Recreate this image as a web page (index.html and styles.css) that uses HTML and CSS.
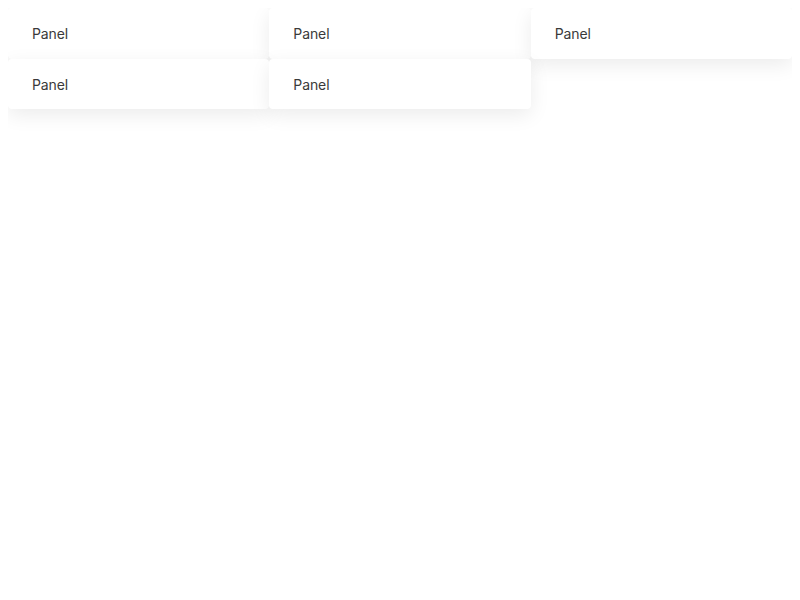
FILE: index.html
```html
<!DOCTYPE html>
<html>
<head>
<meta charset="utf-8">
<link rel="stylesheet" href="styles.css">
</head>
<body>
<div class="grid">
  <div class="panel">Panel</div>
  <div class="panel">Panel</div>
  <div class="panel">Panel</div>
  <div class="panel">Panel</div>
  <div class="panel">Panel</div>
</div>
</body>
</html>
```
FILE: styles.css
```css
html {
  background: #fff;
}
body {
  margin: 8px;
  min-height: calc(100vh - 16px);
  font-family: Inter, "Noto Sans", sans-serif;
}
.grid {
  display: grid;
  grid-template-columns: repeat(3, 1fr);
}
.panel {
  background: #fff;
  border-radius: 4px;
  box-shadow: 0 6px 20px rgba(0, 0, 0, 0.08);
  padding: 17px 24px 15px;
  font-size: 14px;
  line-height: 18.67px;
  color: #3a3a3a;
  letter-spacing: -0.1px;
}
```
